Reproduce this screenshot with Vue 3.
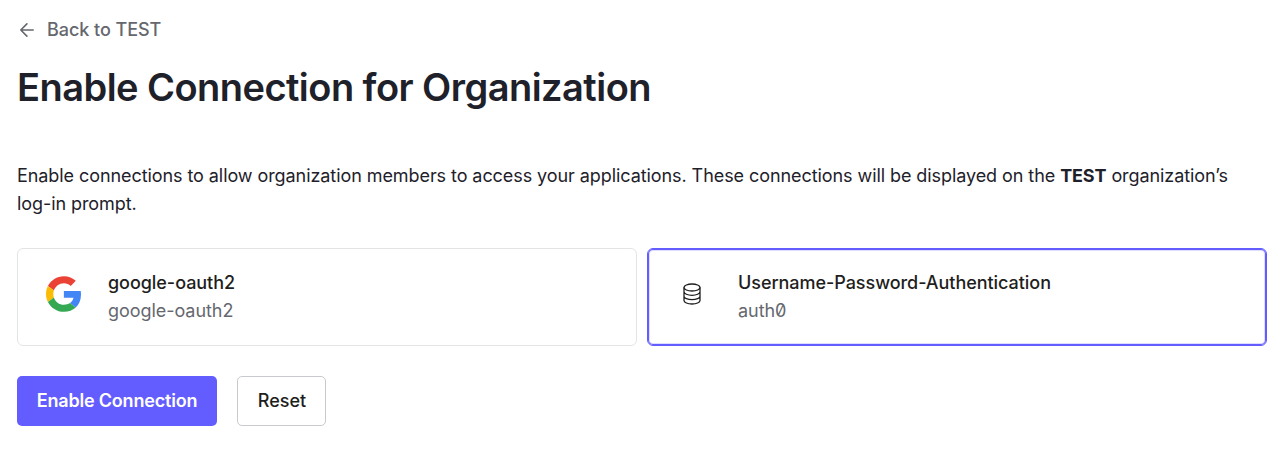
<script setup>
const connections = [
  { name: 'google-oauth2', strategy: 'google-oauth2', icon: 'google', selected: false },
  { name: 'Username-Password-Authentication', strategy: 'auth0', icon: 'db', selected: true },
]
</script>

<template>
  <main class="page">
    <a class="back">
      <svg width="20" height="20" viewBox="0 0 20 20" fill="none" stroke="currentColor" stroke-width="1.6" stroke-linecap="round" stroke-linejoin="round">
        <path d="M16.200 10H3.800M9.900 3.900L3.800 10l6.100 6.100" />
      </svg>
      <span>Back to TEST</span>
    </a>
    <h1>Enable Connection for Organization</h1>
    <p class="intro">Enable connections to allow organization members to access your applications. These connections will be displayed on the <strong>TEST</strong> organization’s<br>log-in prompt.</p>
    <div class="cards">
      <div v-for="c in connections" :key="c.name" class="card" :class="{ selected: c.selected }">
        <div class="icon" :class="c.icon">
          <svg v-if="c.icon === 'google'" width="35" height="36" viewBox="0 0 47 48">
            <path fill="#EA4335" d="M24 9.5c3.54 0 6.71 1.22 9.21 3.6l6.85-6.85C35.9 2.38 30.47 0 24 0 14.62 0 6.51 5.38 2.56 13.22l7.98 6.19C12.43 13.72 17.74 9.5 24 9.5z" />
            <path fill="#4285F4" d="M46.98 24.55c0-1.57-.15-3.09-.38-4.55H24v9.02h12.94c-.58 2.96-2.26 5.48-4.78 7.18l7.73 6c4.51-4.18 7.09-10.36 7.09-17.65z" />
            <path fill="#FBBC05" d="M10.53 28.59c-.48-1.45-.76-2.99-.76-4.59s.27-3.14.76-4.59l-7.98-6.19C.92 16.46 0 20.12 0 24c0 3.88.92 7.54 2.56 10.78l7.97-6.19z" />
            <path fill="#34A853" d="M24 48c6.48 0 11.93-2.13 15.89-5.81l-7.73-6c-2.15 1.45-4.92 2.3-8.16 2.3-6.26 0-11.57-4.22-13.47-9.91l-7.98 6.19C6.51 42.62 14.62 48 24 48z" />
          </svg>
          <svg v-else width="24" height="24" viewBox="0 0 24 24" fill="none" stroke="#1e1e20" stroke-width="1.3">
            <ellipse cx="12" cy="5.500" rx="8" ry="3.500" />
            <path d="M4 5.500v13c0 1.930 3.600 3.500 8 3.500s8-1.570 8-3.500v-13M4 9.800c0 1.930 3.600 3.500 8 3.500s8-1.570 8-3.500M4 14.200c0 1.930 3.600 3.500 8 3.500s8-1.570 8-3.500" />
          </svg>
        </div>
        <div class="text">
          <div class="name">{{ c.name }}</div>
          <div class="strategy">{{ c.strategy }}</div>
        </div>
      </div>
    </div>
    <div class="actions">
      <button class="primary">Enable Connection</button>
      <button class="secondary">Reset</button>
    </div>
  </main>
</template>

<style scoped>
.page { box-sizing: border-box; height: 459px; padding: 16px 21px 0 17px; font-family: Inter, sans-serif; font-size: 18px; line-height: 28px; color: #1e212a; background: #fff; }
.back { display: flex; align-items: center; gap: 10px; height: 28px; color: #65676e; font-weight: 500; letter-spacing: -0.06px; }
h1 { margin: 19px 0 0; font-size: 38px; line-height: 48px; font-weight: 600; letter-spacing: -0.54px; white-space: nowrap; }
.intro { margin: 51px 0 0; white-space: nowrap; letter-spacing: -0.073px; }
strong { font-weight: 700; letter-spacing: -0.12px; }
.cards { display: grid; grid-template-columns: 1fr 1fr; gap: 10px; margin-top: 30px; }
.card { box-sizing: border-box; height: 98px; display: flex; align-items: center; border: 1px solid #e3e4e6; border-radius: 6px; }
.card.selected { border-color: #635dff; box-shadow: inset 0 0 0 1px #635dff, inset 0 0 0 2px #dedcff; }
.icon { box-sizing: border-box; width: 90px; display: flex; justify-content: center; padding-bottom: 6px; }
.icon.google { padding-left: 1px; }
.icon.db { padding-right: 2px; }
.name { color: #1e1e20; font-weight: 500; letter-spacing: -0.05px; }
.strategy { color: #65676e; letter-spacing: -0.05px; font-feature-settings: "zero"; }
.actions { display: flex; gap: 20px; margin-top: 30px; }
button { box-sizing: border-box; height: 50px; padding: 0; border-radius: 5px; font: 500 18px/28px Inter, sans-serif; }
.primary { width: 200px; border: 0; background: #635dff; color: #fff; font-weight: 600; letter-spacing: -0.19px; }
.secondary { width: 89px; padding-left: 1px; border: 1px solid #c9cace; background: #fff; color: #1e1e20; }
</style>
